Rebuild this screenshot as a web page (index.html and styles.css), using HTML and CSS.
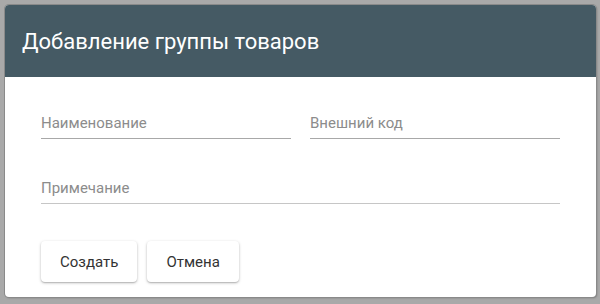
FILE: index.html
```html
<!DOCTYPE html>
<html lang="ru">
<head>
    <meta charset="UTF-8">
    <meta name="viewport" content="width=device-width, initial-scale=1.0">
    <title>Добавление группы товаров</title>
    <link rel="stylesheet" href="styles.css">
</head>
<body>

    <div class="dialog">
        <div class="dialog-header">Добавление группы товаров</div>
        <div class="dialog-body">
            <div class="field-row">
                <div class="field"><span class="field-label">Наименование</span></div>
                <div class="field"><span class="field-label">Внешний код</span></div>
            </div>
            <div class="field-row">
                <div class="field field-wide"><span class="field-label">Примечание</span></div>
            </div>
            <div class="actions">
                <button class="btn">Создать</button>
                <button class="btn">Отмена</button>
            </div>
        </div>
    </div>

</body>
</html>
```

FILE: styles.css
```css
html, body {
    margin: 0;
    padding: 0;
}
body {
    font-family: Roboto, "Liberation Sans", Arial, sans-serif;
    background-color: #a9a9a9;
    width: 600px;
    height: 304px;
    padding: 5px 4px 0 5px;
    box-sizing: border-box;
}
.dialog {
    width: 591px;
    height: 292px;
    background-color: #fff;
    border-radius: 4px;
    overflow: hidden;
    box-shadow: 0 0 0 1px #8a8a8a, 1px 1px 2px #777;
}
.dialog-header {
    height: 72px;
    background-color: #455a64;
    color: #fff;
    font-size: 22px;
    line-height: 74px;
    padding-left: 17px;
    box-sizing: border-box;
}
.dialog-body {
    padding: 34px 36px 16px 36px;
}
.field-row {
    display: flex;
    gap: 19px;
    margin-bottom: 37px;
}
.field {
    width: 250px;
    height: 27px;
    border-bottom: 1px solid #a8a8a8;
}
.field-wide {
    width: 519px;
    border-bottom-color: #c6c6c6;
}
.field-label {
    display: block;
    padding-top: 2px;
    font-size: 15px;
    line-height: 20px;
    color: #8c8c8c;
}
.actions {
    display: flex;
    gap: 10px;
}
.btn {
    height: 41px;
    padding: 0 19px;
    font-family: inherit;
    font-size: 15px;
    color: #333;
    background-color: #fff;
    border: none;
    border-radius: 4px;
    box-shadow: 0 1px 3px rgba(0, 0, 0, 0.25), 0 1px 1px rgba(0, 0, 0, 0.12);
    cursor: pointer;
}
```
